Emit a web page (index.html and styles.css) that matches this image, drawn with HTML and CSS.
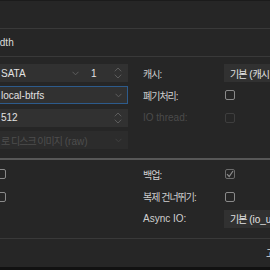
FILE: index.html
```html
<!DOCTYPE html>
<html lang="ko">
<head>
    <meta charset="UTF-8">
    <title>하드 디스크 추가</title>
    <link rel="stylesheet" href="styles.css">
</head>
<body>

  <div class="dialog">

    <div class="titlebar"></div>

    <div class="tabs">
      <span class="tab tab-first ko">디스크</span>
      <span class="tab">Bandwidth</span>
    </div>

    <div class="section main">
      <div class="col">
        <div class="row">
          <label class="ko">버스/디바이스:</label>
          <div class="pair">
            <div class="field bus"><span>SATA</span><svg class="chev" width="7" height="5" viewBox="0 0 7 5"><polyline points="0.5,0.8 3.5,3.8 6.5,0.8"/></svg></div>
            <div class="field number"><span>1</span><svg class="spin" width="8" height="12" viewBox="0 0 8 12"><polyline points="0.8,4.3 4,1 7.2,4.3"/><polyline points="0.8,7.7 4,11 7.2,7.7"/></svg></div>
          </div>
        </div>
        <div class="row">
          <label class="ko">스토리지:</label>
          <div class="field focus"><span>local-btrfs</span><svg class="chev" width="7" height="5" viewBox="0 0 7 5"><polyline points="0.5,0.8 3.5,3.8 6.5,0.8"/></svg></div>
        </div>
        <div class="row">
          <label class="ko">디스크 크기 (GiB):</label>
          <div class="field"><span>512</span><svg class="spin" width="8" height="12" viewBox="0 0 8 12"><polyline points="0.8,4.3 4,1 7.2,4.3"/><polyline points="0.8,7.7 4,11 7.2,7.7"/></svg></div>
        </div>
        <div class="row">
          <label class="ko">형식:</label>
          <div class="field disabled"><span><span class="ko">로 디스크 이미지</span> (raw)</span><svg class="chev" width="7" height="5" viewBox="0 0 7 5"><polyline points="0.5,0.8 3.5,3.8 6.5,0.8"/></svg></div>
        </div>
      </div>

      <div class="col">
        <div class="row">
          <label class="ko">캐시:</label>
          <div class="field"><span><span class="ko">기본</span> (<span class="ko">캐시 없음</span>)</span><svg class="chev" width="7" height="5" viewBox="0 0 7 5"><polyline points="0.5,0.8 3.5,3.8 6.5,0.8"/></svg></div>
        </div>
        <div class="row">
          <label class="ko">폐기처리:</label>
          <span class="check"></span>
        </div>
        <div class="row off">
          <label>IO thread:</label>
          <span class="check"></span>
        </div>
        <div class="row"></div>
      </div>
    </div>

    <div class="section adv">
      <div class="col">
        <div class="row">
          <label class="ko">SSD 에뮬레이션:</label>
          <span class="check"></span>
        </div>
        <div class="row">
          <label class="ko">읽기 전용:</label>
          <span class="check"></span>
        </div>
      </div>

      <div class="col">
        <div class="row">
          <label class="ko">백업:</label>
          <span class="check checked"><svg width="8" height="8" viewBox="0 0 8 8"><polyline points="1,4.2 3.2,6.5 7,1"/></svg></span>
        </div>
        <div class="row">
          <label class="ko">복제 건너뛰기:</label>
          <span class="check"></span>
        </div>
        <div class="row">
          <label>Async IO:</label>
          <div class="field"><span><span class="ko">기본</span> (io_uring)</span><svg class="chev" width="7" height="5" viewBox="0 0 7 5"><polyline points="0.5,0.8 3.5,3.8 6.5,0.8"/></svg></div>
        </div>
      </div>
    </div>

    <div class="footer">
      <span class="ko">고급</span>
      <span class="check"></span>
    </div>

  </div>

  <div class="bottombar"></div>

</body>
</html>
```

FILE: styles.css
```css
body {
  margin: 0;
  background: #262626;
  color: #dcdcdc;
  font-family: "Liberation Sans", "Noto Sans CJK KR", sans-serif;
  font-size: 10px;
  overflow: hidden;
  height: 270px;
}

.ko {
  letter-spacing: -1px;
}

.dialog {
  margin-left: -86px;
  width: 480px;
}

.titlebar {
  height: 27px;
  border-top: 1px solid #1b1b1b;
  border-bottom: 1px solid #393939;
}

.tabs {
  display: flex;
  align-items: center;
  height: 27px;
  border-bottom: 1px solid #393939;
}

.tab-first {
  width: 53px;
  flex: none;
}

.section {
  display: flex;
  gap: 15px;
}

.main {
  padding: 7px 0 9px;
  border-bottom: 2px solid #575757;
}

.adv {
  padding: 5px 0 10px;
  border-bottom: 1px solid #393939;
}

.col {
  display: flex;
  flex-direction: column;
  gap: 4.4px;
  width: 214px;
  flex: none;
}

.row {
  display: flex;
  align-items: center;
  height: 18px;
}

.row label {
  width: 81px;
  flex: none;
  color: #cfcfcf;
}

.row.off label {
  color: #4b4b4b;
}

.field {
  box-sizing: border-box;
  width: 133px;
  height: 18px;
  padding: 0 6px;
  display: flex;
  align-items: center;
  justify-content: space-between;
  background: #313131;
  color: #e2e2e2;
  white-space: nowrap;
}

.field.focus {
  border: 1px solid #2d5b8c;
  padding: 0 5px;
}

.field.disabled {
  background: #2c2c2c;
  color: #4e4e4e;
}

.pair {
  display: flex;
  width: 133px;
}

.pair .bus {
  width: 90px;
}

.pair .number {
  width: 43px;
}

.chev polyline,
.spin polyline {
  fill: none;
  stroke: #5e5e5e;
  stroke-width: 1;
}

.field.disabled .chev polyline {
  stroke: #404040;
}

.check {
  box-sizing: border-box;
  width: 10px;
  height: 10px;
  margin-left: 1px;
  border: 1px solid #8a8a8a;
  border-radius: 2px;
  display: flex;
  align-items: center;
  justify-content: center;
}

.row.off .check {
  border-color: #3e3e3e;
}

.check.checked {
  border-color: #6c6c6c;
}

.check.checked polyline {
  fill: none;
  stroke: #8c8c8c;
  stroke-width: 1.2;
}

.footer {
  display: flex;
  align-items: center;
  gap: 6px;
  height: 28px;
  padding-left: 352px;
  color: #dcdcdc;
}

.bottombar {
  height: 3px;
  background: #111111;
}
```
